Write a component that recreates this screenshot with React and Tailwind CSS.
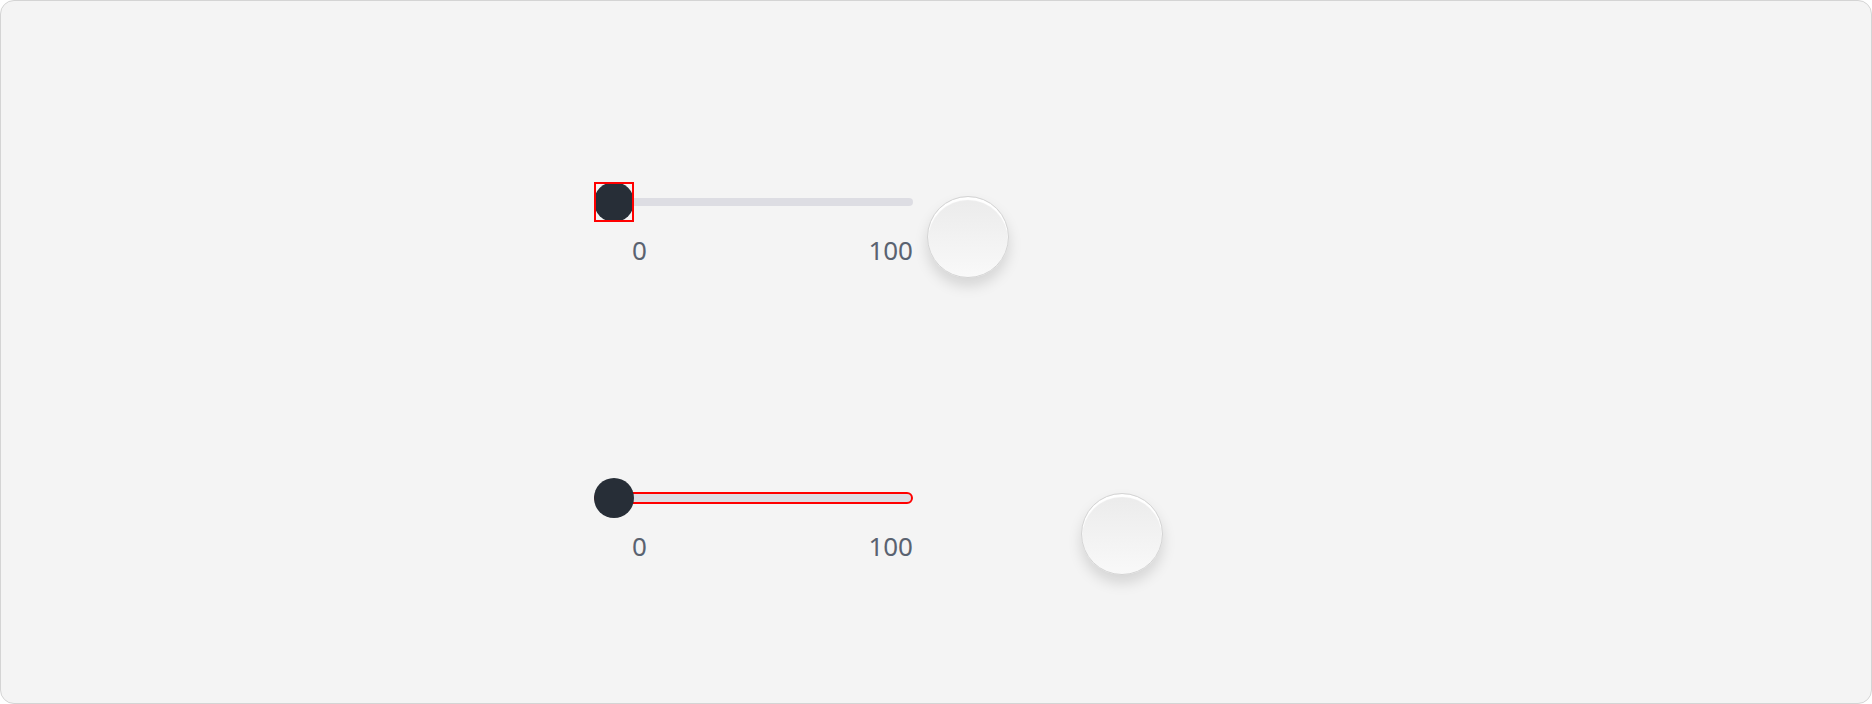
import React from 'react';

function Knob({ className }) {
    return (
        <div
            className={`size-[82px] shrink-0 rounded-full border border-[#d4d4d4] bg-gradient-to-b from-[#ebebeb] to-[#f9f9f9] shadow-[inset_0_3px_1px_#ffffff,0_8px_14px_rgba(0,0,0,0.13)] ${className}`}
        />
    );
}

function Slider({ outlined, boxed }) {
    return (
        <div className="w-[319px] shrink-0">
            <div className="relative flex h-10 items-center">
                <div
                    className={
                        outlined
                            ? 'h-[12px] w-full rounded-full border-2 border-[#ff0000] bg-[#dddde3]'
                            : 'h-2 w-full rounded-full bg-[#dddde3]'
                    }
                />
                <div className="absolute left-0 top-0 size-10 rounded-full bg-[#272e37]" />
                {boxed && <div className="absolute left-0 top-0 size-10 border-2 border-[#ff0000]" />}
            </div>
            <div className="mt-[12px] flex justify-between pl-[38px] text-[26px] leading-[32px] text-[#5a6270] [font-family:'Noto_Sans',sans-serif]">
                <span>0</span>
                <span>100</span>
            </div>
        </div>
    );
}

export default function App() {
    return (
        <div className="h-[704px] w-full rounded-[14px] border border-[#d4d4d4] bg-[#f4f4f4] pl-[593px] pt-[181px]">
            <div className="flex items-start">
                <Slider boxed />
                <Knob className="ml-[14px] mt-[14px]" />
            </div>
            <div className="mt-[200px] flex items-start">
                <Slider outlined />
                <Knob className="ml-[168px] mt-[15px]" />
            </div>
        </div>
    );
}
